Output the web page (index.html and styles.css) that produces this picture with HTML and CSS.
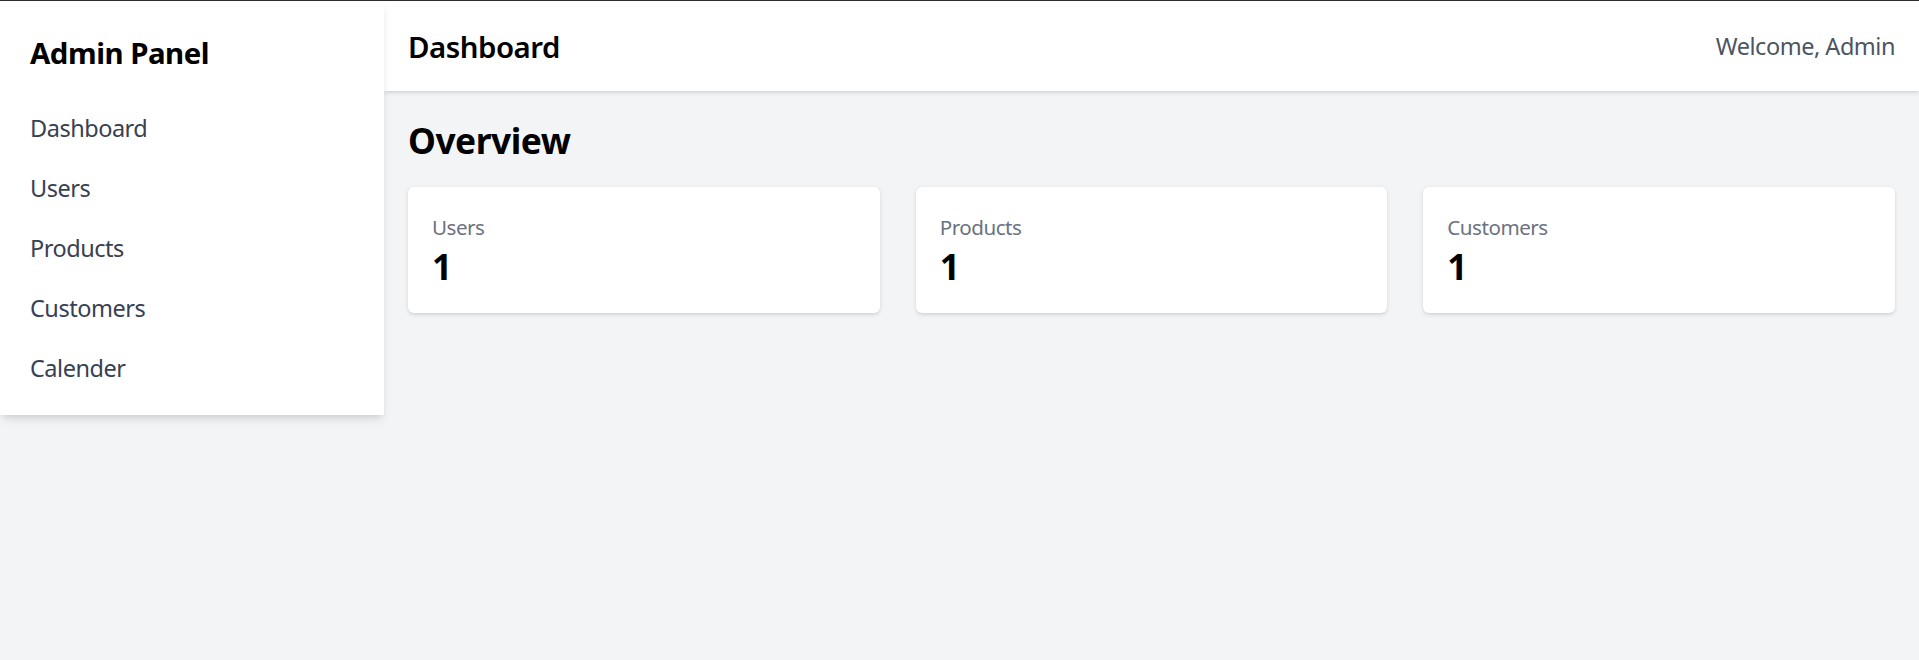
FILE: index.html
```html
<!DOCTYPE html>
<html lang="en">
<head>
<meta charset="utf-8">
<title>Admin Panel</title>
<link rel="stylesheet" href="styles.css">
</head>
<body>
<div class="layout">
  <aside class="sidebar">
    <h1 class="brand">Admin Panel</h1>
    <nav class="nav">
      <a class="nav-link" href="#">Dashboard</a>
      <a class="nav-link" href="#">Users</a>
      <a class="nav-link" href="#">Products</a>
      <a class="nav-link" href="#">Customers</a>
      <a class="nav-link" href="#">Calender</a>
    </nav>
  </aside>
  <div class="main">
    <header class="topbar">
      <h2 class="title">Dashboard</h2>
      <span class="welcome">Welcome, Admin</span>
    </header>
    <section class="content">
      <h2 class="overview">Overview</h2>
      <div class="cards">
        <div class="card">
          <div class="card-label">Users</div>
          <div class="card-value">1</div>
        </div>
        <div class="card">
          <div class="card-label">Products</div>
          <div class="card-value">1</div>
        </div>
        <div class="card">
          <div class="card-label">Customers</div>
          <div class="card-value">1</div>
        </div>
      </div>
    </section>
  </div>
</div>
</body>
</html>
```

FILE: styles.css
```css
* { box-sizing: border-box; }

html, body { height: 100%; }

body {
  margin: 0;
  border-top: 1px solid #2b2b2b;
  background: #f3f4f6;
  font-family: "Noto Sans", "Open Sans", sans-serif;
  letter-spacing: -0.03em;
  color: #000;
}

.layout {
  display: flex;
  align-items: flex-start;
  min-height: 100%;
}

.sidebar {
  width: 384px;
  flex: 0 0 384px;
  background: #fff;
  padding: 30px;
  box-shadow: 0 6px 9px -1.5px rgba(0,0,0,0.1), 0 3px 6px -3px rgba(0,0,0,0.1);
  position: relative;
  z-index: 2;
}

.brand {
  margin: 0 0 36px;
  padding-top: 2px;
  font-size: 29.4px;
  line-height: 40px;
  font-weight: 700;
}

.nav {
  display: flex;
  flex-direction: column;
  gap: 24px;
}

.nav-link {
  padding-top: 2px;
  font-size: 23.5px;
  line-height: 34px;
  color: #374151;
  text-decoration: none;
}

.main {
  flex: 1;
  min-width: 0;
}

.topbar {
  background: #fff;
  padding: 24px;
  display: flex;
  justify-content: space-between;
  align-items: center;
  box-shadow: 0 1.5px 4.5px 0 rgba(0,0,0,0.1), 0 1.5px 3px -1.5px rgba(0,0,0,0.1);
  position: relative;
  z-index: 1;
}

.title {
  margin: 0;
  padding-top: 2px;
  font-size: 29.4px;
  line-height: 40px;
  font-weight: 600;
}

.welcome {
  font-size: 23.5px;
  line-height: 36px;
  color: #4b5563;
}

.content {
  padding: 24px;
}

.overview {
  margin: 0 0 24px;
  padding-top: 2px;
  font-size: 35.3px;
  line-height: 46px;
  font-weight: 700;
}

.cards {
  display: grid;
  grid-template-columns: repeat(3, 1fr);
  gap: 36px;
}

.card {
  background: #fff;
  border-radius: 6px;
  padding: 24px;
  box-shadow: 0 1.5px 4.5px 0 rgba(0,0,0,0.1), 0 1.5px 3px -1.5px rgba(0,0,0,0.1);
}

.card-label {
  padding-top: 2px;
  font-size: 20.6px;
  line-height: 28px;
  color: #6b7280;
}

.card-value {
  padding-top: 2px;
  font-size: 35.3px;
  line-height: 46px;
  font-weight: 700;
}
```
